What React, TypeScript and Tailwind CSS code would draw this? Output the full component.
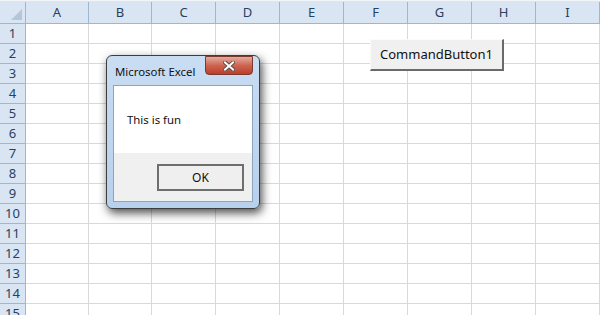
import React from "react";

const cols = ["A", "B", "C", "D", "E", "F", "G", "H", "I"];
const rows = Array.from({ length: 15 }, (_, i) => i + 1);

export default function App() {
  return (
    <div
      className="relative w-[600px] h-[315px] overflow-hidden bg-white"
      style={{ fontFamily: '"Noto Sans", "Open Sans", sans-serif' }}
    >
      <div className="h-[2px] bg-[#f2f4f7] border-b border-[#dfe5ec]" />
      <div className="grid grid-cols-[26px_63px_63px_repeat(7,64px)] grid-rows-[22px_repeat(15,20px)]">
        <div className="relative bg-[#dae5f3] border-r border-b border-[#9eb6ce]">
          <div className="absolute right-[3px] bottom-[3px] w-0 h-0 border-l-[11px] border-l-transparent border-b-[11px] border-b-[#b4c6dc]" />
        </div>
        {cols.map((c) => (
          <div
            key={c}
            className="flex items-center justify-center bg-[#dae5f3] border-r border-b border-[#9eb6ce] text-[13px] text-[#27415f]"
          >
            {c}
          </div>
        ))}
        {rows.map((r) => (
          <React.Fragment key={r}>
            <div className="flex items-center justify-center bg-[#dae5f3] border-r border-b border-[#9eb6ce] text-[13px] text-[#27415f]">
              {r}
            </div>
            {cols.map((c) => (
              <div key={c} className="border-r border-b border-[#d9d9d9]" />
            ))}
          </React.Fragment>
        ))}
      </div>

      {/* Command button */}
      <div className="absolute left-[370px] top-[39px] w-[134px] h-[32px] flex items-center justify-center bg-[#f0f0f0] border-t border-l border-t-[#fbfbfb] border-l-[#fbfbfb] border-r-2 border-b-2 border-r-[#6a6a6a] border-b-[#6a6a6a] text-[13px] text-[#111]">
        CommandButton1
      </div>

      {/* Dialog */}
      <div className="absolute left-[106px] top-[55px] w-[154px] h-[154px] rounded-[6px] border border-[#3d3d3d] bg-gradient-to-b from-[#c9ddf3] to-[#b7d0ec] shadow-[2px_4px_10px_rgba(0,0,0,0.7)] flex flex-col">
        <div className="relative h-[29px] shrink-0">
          <div className="absolute left-[8px] top-[7px] text-[11.4px] text-[#111]">
            Microsoft Excel
          </div>
          <div className="absolute left-[98px] top-[0px] w-[48px] h-[19px] rounded-b-[4px] border border-[#7a3a2e] bg-gradient-to-b from-[#e2ab9f] via-[#cd6350] to-[#bb3f2b] flex items-center justify-center">
            <svg width="12" height="10" viewBox="0 0 12 10">
              <path
                d="M2 1.5 L10 8.5 M10 1.5 L2 8.5"
                stroke="#5a4a4a"
                strokeWidth="3.8"
                strokeLinecap="square"
              />
              <path
                d="M2 1.5 L10 8.5 M10 1.5 L2 8.5"
                stroke="#ffffff"
                strokeWidth="2"
                strokeLinecap="square"
              />
            </svg>
          </div>
        </div>
        <div className="mx-[6px] h-[117px] border border-[#8ba4c0] flex flex-col">
          <div className="h-[67px] bg-white flex items-center pl-[13px] text-[11.4px] text-[#111]">
            This is fun
          </div>
          <div className="flex-1 bg-[#f0f0f0] flex justify-end items-start pt-[11px] pr-[8px]">
            <div className="w-[87px] h-[27px] flex items-center justify-center bg-[#efefef] border-2 border-[#6e6e6e] text-[12px] text-[#111]">
              OK
            </div>
          </div>
        </div>
      </div>
    </div>
  );
}
